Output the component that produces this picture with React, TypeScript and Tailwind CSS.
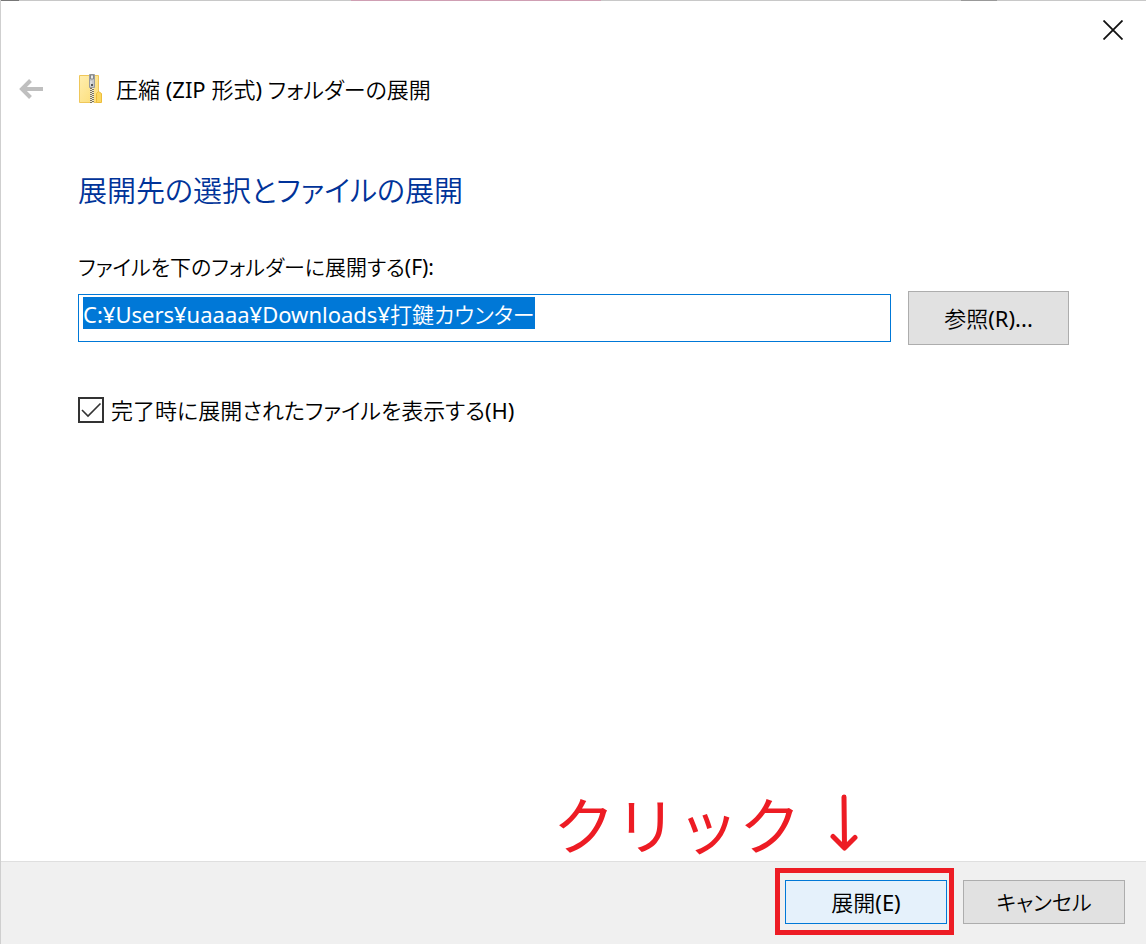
import { useEffect, useRef, useState } from 'react';

const buttonBase = 'flex items-center justify-center border leading-8 text-black';

const ZipFolderIcon = () => (
  <svg className="h-8 w-6 shrink-0" viewBox="0 0 24 32" aria-hidden="true">
    <defs>
      <linearGradient id="folder" x1="0" y1="0" x2="1" y2="1">
        <stop offset="0" stopColor="#ffeeb0" />
        <stop offset="1" stopColor="#fbdc72" />
      </linearGradient>
    </defs>
    <path d="M1.5 2.5H20.5V29.5H1.5Z" fill="url(#folder)" stroke="#efc75a" />
    <path d="M18.5 29.5V20.5L20.5 18.5L23.5 20.5V29.5Z" fill="#fbd75f" stroke="#edbd3c" />
    <path d="M12 14H16V30H12Z" fill="#f2e9cd" />
    <path d="M13 15V30M15 16V30" stroke="#5c5648" strokeWidth="1.6" strokeDasharray="1 1" />
    <path d="M11.5 1.5H16.5V14.5H11.5Z" fill="#c6c8ca" stroke="#999c9f" />
    <path d="M12.5 2H15.5V6H12.5Z" fill="#e8e9ea" stroke="#85888b" />
    <path d="M13 8V13" stroke="#eef0f1" />
    <path d="M13 12H15" stroke="#55585b" strokeWidth="2" />
  </svg>
);

const TitleBar = () => (
  <header>
    <div className="flex justify-end">
      <button type="button" aria-label="閉じる" className="flex h-[58px] w-[66px] items-center justify-center">
        <svg className="h-5 w-5" viewBox="0 0 20 20" aria-hidden="true">
          <path d="M0.5 0.5L19.5 19.5M19.5 0.5L0.5 19.5" stroke="#111" strokeWidth="1.8" />
        </svg>
      </button>
    </div>
    <div className="flex items-center pt-[14px] pl-[18px]">
      <button type="button" aria-label="戻る" disabled className="mr-[35px]">
        <svg className="h-5 w-6" viewBox="0 0 24 20" fill="none" aria-hidden="true">
          <path d="M3 10H24M11.5 1.5L3 10L11.5 18.5" stroke="#bfbfbf" strokeWidth="4" />
        </svg>
      </button>
      <ZipFolderIcon />
      <h1 className="ml-[14px] text-[22px] leading-8 text-black">圧縮 (ZIP 形式) フォルダーの展開</h1>
    </div>
  </header>
);

const ClickNote = () => (
  <div className="absolute right-[288px] bottom-[82px] flex items-start gap-[29px] text-[#ed1c24]">
    <span className="text-[62px] leading-[72px] font-['Noto_Sans','Noto_Sans_CJK_JP',sans-serif] [font-feature-settings:normal]">
      クリック
    </span>
    <svg className="mt-1 h-[58px] w-7" viewBox="0 0 28 58" fill="none" aria-hidden="true">
      <path
        d="M14 3L14.5 54M3 42.5L14.5 54L25 43.5"
        stroke="currentColor"
        strokeWidth="5"
        strokeLinecap="round"
        strokeLinejoin="round"
      />
    </svg>
  </div>
);

export default function App() {
  const [path, setPath] = useState('C:¥Users¥uaaaa¥Downloads¥打鍵カウンター');
  const [showFiles, setShowFiles] = useState(true);
  const pathInput = useRef<HTMLInputElement>(null);

  // The suggested folder starts out selected
  useEffect(() => {
    pathInput.current?.focus();
    pathInput.current?.select();
  }, []);

  return (
    <div className="flex min-h-screen flex-col border-l border-[#cfcfcf] bg-white font-['Noto_Sans','Noto_Sans_CJK_JP_DemiLight','Noto_Sans_CJK_JP',sans-serif] [font-feature-settings:'palt']">
      {/* Window edge */}
      <div className="flex h-px bg-[#c8c8c8]">
        <div className="w-[18px] bg-[#777777]" />
        <div className="ml-[332px] w-[250px] bg-[#cf9fb3]" />
        <div className="ml-[360px] w-9 bg-[#999999]" />
      </div>

      <TitleBar />

      <main className="flex-grow pr-[77px] pl-[77px]">
        <h2 className="mt-[66px] text-[29px] leading-10 text-[#003399]">展開先の選択とファイルの展開</h2>

        <label htmlFor="path" className="mt-10 block text-[21px] leading-8 text-black">
          ファイルを下のフォルダーに展開する(F):
        </label>
        <div className="mt-2 flex items-center gap-[17px]">
          <input
            id="path"
            ref={pathInput}
            type="text"
            value={path}
            onChange={(e) => setPath(e.target.value)}
            className="h-12 min-w-0 flex-1 border border-[#0078d7] pb-[10px] pl-1 text-[22px] leading-8 text-black outline-none selection:bg-[#0078d7] selection:text-white"
          />
          <button type="button" className={`${buttonBase} h-[54px] w-[161px] border-[#adadad] bg-[#e1e1e1] text-[22px]`}>
            参照(R)...
          </button>
        </div>

        <div className="mt-[49px] flex items-center gap-[7px]">
          <span className="relative flex h-[26px] w-[26px]">
            <input
              id="show-files"
              type="checkbox"
              checked={showFiles}
              onChange={(e) => setShowFiles(e.target.checked)}
              className="peer h-[26px] w-[26px] appearance-none border-2 border-[#333333] bg-white"
            />
            <svg
              className="pointer-events-none absolute inset-0 hidden h-[26px] w-[26px] peer-checked:block"
              viewBox="0 0 26 26"
              fill="none"
              aria-hidden="true"
            >
              <path d="M4 13L10 19L22.5 6.5" stroke="#333333" strokeWidth="1.6" />
            </svg>
          </span>
          <label htmlFor="show-files" className="text-[22px] leading-8 text-black">
            完了時に展開されたファイルを表示する(H)
          </label>
        </div>
      </main>

      <footer className="relative flex justify-end gap-4 border-t border-[#dfdfdf] bg-[#f0f0f0] pt-[18px] pr-[21px] pb-5">
        <ClickNote />
        <div className="relative">
          <button type="button" className={`${buttonBase} h-11 w-[162px] border-[#0078d7] bg-[#e5f1fb] text-[22px]`}>
            展開(E)
          </button>
          <div className="pointer-events-none absolute -top-3 -right-[7px] -bottom-[11px] -left-[10px] border-[5px] border-[#ed1c24]" />
        </div>
        <button type="button" className={`${buttonBase} h-11 w-[162px] border-[#adadad] bg-[#e1e1e1] text-[21px]`}>
          キャンセル
        </button>
      </footer>
    </div>
  );
}
